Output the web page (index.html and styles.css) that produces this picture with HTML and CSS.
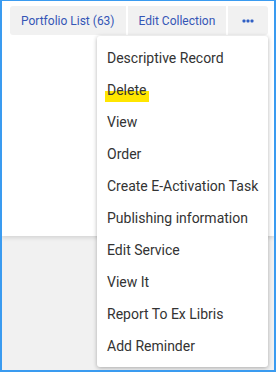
FILE: index.html
```html
<!DOCTYPE html>
<html lang="en">

<head>
    <meta charset="UTF-8">
    <title>Portfolio actions</title>
    <link rel="stylesheet" href="styles.css">
</head>

<body>
    <div class="frame">
        <div class="panel">
            <div class="toolbar">
                <button class="tool-btn">Portfolio List (63)</button>
                <button class="tool-btn">Edit Collection</button>
                <button class="tool-btn more" aria-label="More actions">
                    <svg width="12" height="4" viewBox="0 0 12 4">
                        <rect x="0.5" y="0.5" width="3" height="3" rx="1" fill="#2f5fc4" />
                        <rect x="4.5" y="0.5" width="3" height="3" rx="1" fill="#2f5fc4" />
                        <rect x="8.5" y="0.5" width="3" height="3" rx="1" fill="#2f5fc4" />
                    </svg>
                </button>
            </div>
        </div>

        <!-- dropdown of the "..." button -->
        <ul class="menu">
            <li class="menu-item">Descriptive Record</li>
            <li class="menu-item"><span class="marked">Delete</span></li>
            <li class="menu-item">View</li>
            <li class="menu-item">Order</li>
            <li class="menu-item">Create E-Activation Task</li>
            <li class="menu-item">Publishing information</li>
            <li class="menu-item">Edit Service</li>
            <li class="menu-item">View It</li>
            <li class="menu-item">Report To Ex Libris</li>
            <li class="menu-item">Add Reminder</li>
        </ul>
    </div>
</body>

</html>
```

FILE: styles.css
```css
body {
    margin: 0;
    padding: 0;
    font-family: Roboto, "Liberation Sans", Arial, sans-serif;
}

.frame {
    position: relative;
    width: 276px;
    height: 372px;
    box-sizing: border-box;
    border: 2px solid #3a9bf0;
    border-top-width: 1px;
    background-color: #f1f1f1;
    overflow: hidden;
}

.panel {
    height: 235px;
    background: white;
    box-shadow: 0 2px 4px rgba(0, 0, 0, 0.12);
}

.toolbar {
    display: flex;
    gap: 2px;
    padding: 5px 0 0 8px;
}

.tool-btn {
    height: 29px;
    padding: 0 11px;
    border: none;
    background-color: #f1f1f1;
    color: #3556b6;
    font-family: inherit;
    font-size: 12px;
    cursor: pointer;
}

.tool-btn:first-child {
    border-radius: 3px 0 0 3px;
}

.tool-btn.more {
    width: 40px;
    padding: 0;
    border-radius: 0 3px 3px 0;
    display: flex;
    align-items: center;
    justify-content: center;
}

/* 下拉菜单 */
.menu {
    position: absolute;
    left: 95px;
    top: 35px;
    width: 171px;
    margin: 0;
    padding: 6px 0 5px;
    list-style: none;
    background: white;
    border-radius: 3px;
    box-shadow: 0 1px 4px rgba(0, 0, 0, 0.3);
    z-index: 1;
}

.menu-item {
    height: 32px;
    line-height: 32px;
    padding-left: 10px;
    font-size: 14px;
    color: #333;
    white-space: nowrap;
}

/* yellow marker under "Delete" */
.marked {
    position: relative;
}

.marked::before {
    content: "";
    position: absolute;
    left: -2px;
    right: -3px;
    top: 9px;
    height: 11px;
    background-color: #ffe600;
    z-index: -1;
}
```
